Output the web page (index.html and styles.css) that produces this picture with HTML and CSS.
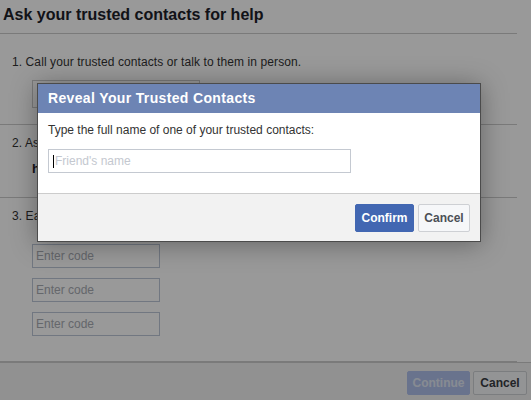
FILE: index.html
```html
<!DOCTYPE html>
<html>
<head>
<meta charset="utf-8">
<link rel="stylesheet" href="styles.css">
</head>
<body>
<div class="page">
  <h1 class="title">Ask your trusted contacts for help</h1>
  <section class="step step1">
    <p class="step-text">1. Call your trusted contacts or talk to them in person.</p>
    <div class="contact-box"></div>
  </section>
  <section class="step step2">
    <p class="step-text">2. Ask them to go to this link and send you the codes they get:</p>
    <p class="link">https://www.facebook.com/recover</p>
  </section>
  <section class="step step3">
    <p class="step-text">3. Each code is 4 digits. Enter the codes below:</p>
    <div class="codes">
      <div class="code-input">Enter code</div>
      <div class="code-input">Enter code</div>
      <div class="code-input">Enter code</div>
    </div>
  </section>
</div>
<div class="page-footer">
  <button class="btn btn-primary btn-disabled">Continue</button>
  <button class="btn btn-default">Cancel</button>
</div>
<div class="overlay"></div>
<div class="dialog">
  <div class="dialog-header">Reveal Your Trusted Contacts</div>
  <div class="dialog-body">
    <p class="dialog-text">Type the full name of one of your trusted contacts:</p>
    <div class="name-input"><span class="caret"></span><span class="placeholder">Friend's name</span></div>
  </div>
  <div class="dialog-footer">
    <button class="btn btn-primary btn-lg">Confirm</button>
    <button class="btn btn-default btn-lg">Cancel</button>
  </div>
</div>
</body>
</html>
```

FILE: styles.css
```css
* { box-sizing: border-box; }
html, body { margin: 0; padding: 0; }
body {
  width: 531px;
  height: 400px;
  overflow: hidden;
  background: #ffffff;
  font-family: "Liberation Sans", Arial, sans-serif;
  color: #333333;
  position: relative;
}
p { margin: 0; }

.page { width: 517px; }

.title {
  margin: 0;
  padding: 5px 0 8px 3px;
  font-size: 16px;
  line-height: 20px;
  font-weight: bold;
  color: #1d2129;
  border-bottom: 1px solid #cccccc;
}

.step { border-bottom: 1px solid #cccccc; padding-left: 12px; }
.step-text { font-size: 12px; line-height: 16px; color: #333333; white-space: nowrap; letter-spacing: 0.09px; }

.step1 { padding-top: 20px; padding-bottom: 16px; }
.contact-box {
  margin: 10px 0 0 20px;
  width: 168px;
  height: 28px;
  border: 1px solid #cccccc;
  background: #ffffff;
}

.step2 { padding-top: 10px; padding-bottom: 19px; }
.link {
  margin: 9px 0 0 20px;
  font-size: 13px;
  line-height: 18px;
  font-weight: bold;
  color: #1d2129;
  white-space: nowrap;
}

.step3 { padding-top: 10px; padding-bottom: 25px; }
.codes { margin: 20px 0 0 20px; display: flex; flex-direction: column; gap: 10px; }
.code-input {
  width: 128px;
  height: 24px;
  border: 1px solid #bdc7d8;
  padding-left: 3px;
  font-size: 12px;
  line-height: 22px;
  color: #a8acb3;
}

.page-footer {
  border-top: 1px solid #cccccc;
  background: #f2f2f2;
  height: 39px;
  padding: 8px 4px 0 0;
  display: flex;
  justify-content: flex-end;
  gap: 3px;
}

.btn {
  font-family: "Liberation Sans", Arial, sans-serif;
  font-size: 12px;
  font-weight: bold;
  border-radius: 2px;
  height: 24px;
  padding: 0;
  line-height: 22px;
  margin: 0;
  text-align: center;
}
.btn-primary { background: #4267b2; border: 1px solid #4267b2; color: #ffffff; }
.btn-default { background: #f6f7f9; border: 1px solid #ced0d4; color: #4b4f56; }
.btn-disabled { background: #b0c0ec; border-color: #b0c0ec; color: #e2e8f4; width: 63px; }
.page-footer .btn-default { width: 54px; color: #3a3d44; }
.btn-lg { height: 28px; line-height: 26px; }

.overlay {
  position: absolute;
  left: 0; top: 0; right: 0; bottom: 0;
  background: rgba(0, 0, 0, 0.4);
}

.dialog {
  position: absolute;
  left: 37px;
  top: 83px;
  width: 444px;
  height: 159px;
  border: 1px solid #4b4b4b;
  background: #ffffff;
  box-shadow: 0 2px 24px rgba(0, 0, 0, 0.35);
  display: flex;
  flex-direction: column;
}
.dialog-header {
  height: 29px;
  background: #6d84b4;
  color: #ffffff;
  font-size: 14px;
  font-weight: bold;
  line-height: 28px;
  letter-spacing: 0.35px;
  padding-left: 10px;
}
.dialog-body { padding: 9px 10px 0 10px; height: 80px; }
.dialog-text { font-size: 12px; line-height: 16px; color: #333333; white-space: nowrap; }
.name-input {
  margin-top: 11px;
  width: 303px;
  height: 24px;
  border: 1px solid #c4c9d1;
  display: flex;
  align-items: center;
  padding-left: 4px;
  font-size: 12px;
  color: #c4c8cf;
}
.caret { width: 1px; height: 13px; background: #000000; margin-right: 1px; }
.dialog-footer {
  flex: 1;
  border-top: 1px solid #cccccc;
  background: #f2f2f2;
  display: flex;
  justify-content: flex-end;
  align-items: flex-start;
  gap: 4px;
  padding: 10px 10px 0 0;
}
.dialog-footer .btn-primary { width: 59px; }
.dialog-footer .btn-default { width: 52px; }
```
